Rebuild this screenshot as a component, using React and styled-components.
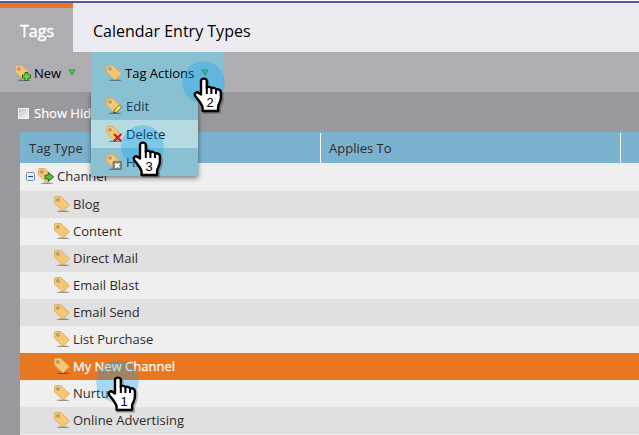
import React from "react";
import styled, { createGlobalStyle } from "styled-components";

const GlobalStyle = createGlobalStyle`
  * { box-sizing: border-box; }
  body {
    margin: 0;
    overflow: hidden;
    background: #99989d;
    font-family: "Open Sans", "Noto Sans", sans-serif;
    font-size: 13px;
    color: #2b2b2b;
  }
`;

const Page = styled.div`
  position: relative;
  width: 100%;
  height: 100vh;
  overflow: hidden;
  border-top: 1px solid #fff;
`;

const TabBar = styled.nav`
  display: flex;
  height: 51px;
  border-top: 2px solid #5a56a3;
  background: #ecebf1;
`;

const Tab = styled.div`
  display: flex;
  align-items: center;
  height: 49px;
  padding: ${(p) => (p.$active ? "1px 0 0 20px" : "6px 20px 0")};
  width: ${(p) => (p.$active ? "73px" : "auto")};
  border-top: ${(p) => (p.$active ? "5px solid #e87722" : "none")};
  background: ${(p) => (p.$active ? "#aeadb2" : "transparent")};
  color: ${(p) => (p.$active ? "#fff" : "#000")};
  -webkit-text-stroke: ${(p) => (p.$active ? "0.4px #fff" : "0")};
  font-size: 16px;
  white-space: nowrap;
`;

const Toolbar = styled.div`
  display: flex;
  height: 40px;
  background: #aeadb2;
`;

const ToolButton = styled.div`
  display: flex;
  align-items: center;
  gap: 3px;
  width: ${(p) => p.$width}px;
  padding: 2px 0 0 15px;
  background: ${(p) => (p.$open ? "#8ac1d2" : "transparent")};
  color: #000;
`;

const Caret = styled.svg`
  width: 8px;
  height: 7px;
  margin: 0 0 1px 4px;
`;

const Filters = styled.div`
  display: flex;
  align-items: center;
  gap: 5px;
  height: 40px;
  padding: 2px 0 0 18px;
  background: #99989d;
  color: #fff;
  -webkit-text-stroke: 0.15px #fff;
`;

const Box = styled.span`
  width: 11px;
  height: 11px;
  border: 1px solid #efefef;
  background: linear-gradient(135deg, #c4c4c4, #f4f4f4);
`;

const Grid = styled.section`
  margin-left: 20px;
`;

const HeadRow = styled.div`
  display: grid;
  grid-template-columns: 300px 300px 1fr;
  height: 31px;
  padding-top: 1px;
  background: #7bb2cf;
`;

const HeadCell = styled.div`
  display: flex;
  align-items: center;
  padding: 0 0 0 ${(p) => (p.$first ? 9 : 8)}px;
  border-left: ${(p) => (p.$first ? "none" : "1px solid #fff")};
`;

const Row = styled.div`
  display: flex;
  align-items: center;
  gap: 3px;
  height: ${(p) => (p.$root ? 28 : 27)}px;
  padding-left: ${(p) => (p.$root ? 6 : 34)}px;
  padding-bottom: ${(p) => (p.$root ? 2 : 1)}px;
  background: ${(p) => (p.$selected ? "#e87722" : p.$shade ? "#e0e0e0" : "#efefef")};
  color: ${(p) => (p.$selected ? "#fff" : "#2b2b2b")};
  -webkit-text-stroke: ${(p) => (p.$selected ? "0.25px #fff" : "0")};
`;

const Expander = styled.svg`
  width: 9px;
  height: 9px;
`;

const TagSvg = styled.svg`
  flex: none;
  width: 16px;
  height: 16px;
`;

const Menu = styled.div`
  position: absolute;
  left: 91px;
  top: 91px;
  width: 107px;
  background: #8ac1d2;
  box-shadow: 0 2px 5px rgba(0, 0, 0, 0.5);
  clip-path: inset(0 -8px -8px -8px);
`;

const MenuItem = styled.div`
  display: flex;
  align-items: center;
  gap: 4px;
  height: 28px;
  padding-left: 15px;
  background: ${(p) => (p.$hover ? "#b5dae1" : "transparent")};
  color: ${(p) => (p.$hover ? "#0c1f3a" : "#253750")};
`;

const Step = styled.svg`
  position: absolute;
  left: ${(p) => p.$x}px;
  top: ${(p) => p.$y}px;
  width: 50px;
  height: 62px;
  overflow: visible;
  pointer-events: none;
`;

const badges = {
  add: (
    <path d="M10 7.5h3v2.5h2.5v3H13v2.5h-3V13H7.5v-3H10z" fill="#6fd34c" stroke="#147516" />
  ),
  edit: (
    <g>
      <path d="M7.6 15.2l.8-3.2 5-5.1 2.2 2.2-5.1 5.2z" fill="#f7df55" stroke="#6b5930" strokeWidth=".9" />
      <path d="M10 12.5l4-4" stroke="#fff6a8" />
      <path d="M7.6 15.4l.6-2 1.4 1.4z" fill="#333" />
    </g>
  ),
  remove: (
    <g>
      <path d="M8 8l7.3 7.3M15.3 8L8 15.3" stroke="#b91318" strokeWidth="2.2" />
      <path d="M8.5 8.5l6.3 6.3M14.8 8.5l-6.3 6.3" stroke="#f23238" strokeWidth=".8" />
    </g>
  ),
  hide: (
    <g>
      <rect x="7" y="7.3" width="8.7" height="8.4" rx="1" fill="#7c7e80" stroke="#686a6c" strokeWidth=".6" />
      <path d="M9.2 9.4l4.3 4.2M13.5 9.4l-4.3 4.2" stroke="#fff" strokeWidth="2.1" />
    </g>
  ),
  go: (
    <path d="M7 7.2h3.2V4.5L15.6 9l-5.4 4.5v-2.7H7z" fill="#55bd38" stroke="#17641b" strokeWidth=".9" />
  ),
};

function TagIcon({ badge }) {
  return (
    <TagSvg viewBox="0 0 16 16">
      <ellipse cx="9" cy="15.3" rx="6.5" ry=".7" fill="#000" opacity=".4" />
      <path
        d="M1.2.5h5.6l8.7 8.3-6.6 6.1L.5 7.1V1.2z"
        fill="#f5c772"
        stroke="#dfa853"
        strokeWidth=".9"
        strokeLinejoin="round"
      />
      <circle cx="3.9" cy="3.9" r="1.4" fill="#c9b48c" stroke="#9a9078" strokeWidth="1" />
      {badge && badges[badge]}
    </TagSvg>
  );
}

function DownArrow() {
  return (
    <Caret viewBox="0 0 8 7">
      <path d="M1 1h6L4 6z" fill="#5cc850" stroke="#2a8a35" strokeLinejoin="round" />
    </Caret>
  );
}

const handShape =
  "M7 17V3.6C7 .3 12.8.3 12.8 3.6V10.2c.7-1.4 4.2-1 4.6.8.9-1.3 4.2-.7 4.6 1.1 1.7-1 4.9.2 4.9 2.8v5.6c0 3.6-2.8 6-2.8 9V33.5H8.6v-3.6C7.6 25.9 3.2 21.4 1.2 18.4-.4 15.4 2.9 13.6 5 15.8z";

function Pointer({ x, y, number }) {
  return (
    <Step $x={x} $y={y} viewBox="0 0 50 62">
      <circle cx="21.5" cy="21.5" r="21.3" fill="#009ff5" fillOpacity=".3" />
      <g transform="translate(12 16.5)">
        <path d={handShape} fill="#000" opacity=".25" transform="translate(1.6 1.6)" stroke="#000" strokeWidth="2.4" />
        <path d={handShape} fill="#fff" stroke="#000" strokeWidth="2.4" strokeLinejoin="round" />
        <path d="M12.8 9.5v6.9M17.4 10.5v5.9M22 12v4.4" stroke="#000" strokeWidth="2" fill="none" />
        <text x="16.2" y="29" textAnchor="middle" fontFamily="Liberation Sans, sans-serif" fontSize="13" fill="#000">
          {number}
        </text>
      </g>
    </Step>
  );
}

const channels = [
  "Blog",
  "Content",
  "Direct Mail",
  "Email Blast",
  "Email Send",
  "List Purchase",
  "My New Channel",
  "Nurture",
  "Online Advertising",
];

export default function App() {
  return (
    <Page>
      <GlobalStyle />
      <TabBar>
        <Tab $active>Tags</Tab>
        <Tab>Calendar Entry Types</Tab>
      </TabBar>
      <Toolbar>
        <ToolButton $width={91}>
          <TagIcon badge="add" />
          New
          <DownArrow />
        </ToolButton>
        <ToolButton $width={132} $open>
          <TagIcon />
          Tag Actions
          <DownArrow />
        </ToolButton>
      </Toolbar>
      <Filters>
        <Box />
        Show Hidden
      </Filters>
      <Grid>
        <HeadRow>
          <HeadCell $first>Tag Type</HeadCell>
          <HeadCell>Applies To</HeadCell>
          <HeadCell />
        </HeadRow>
        <Row $root>
          <Expander viewBox="0 0 9 9">
            <rect x=".5" y=".5" width="8" height="8" rx="1" fill="#e9edf5" stroke="#7890b5" />
            <path d="M2 4.5h5" stroke="#27427a" />
          </Expander>
          <TagIcon badge="go" />
          Channel
        </Row>
        {channels.map((name, i) => (
          <Row key={name} $shade={i % 2 === 0} $selected={name === "My New Channel"}>
            <TagIcon />
            {name}
          </Row>
        ))}
        <Row />
      </Grid>
      <Menu>
        <MenuItem>
          <TagIcon badge="edit" />
          Edit
        </MenuItem>
        <MenuItem $hover>
          <TagIcon badge="remove" />
          Delete
        </MenuItem>
        <MenuItem>
          <TagIcon badge="hide" />
          Hide
        </MenuItem>
      </Menu>
      <Pointer x={95.5} y={359} number="1" />
      <Pointer x={182} y={60} number="2" />
      <Pointer x={121} y={123.5} number="3" />
    </Page>
  );
}
